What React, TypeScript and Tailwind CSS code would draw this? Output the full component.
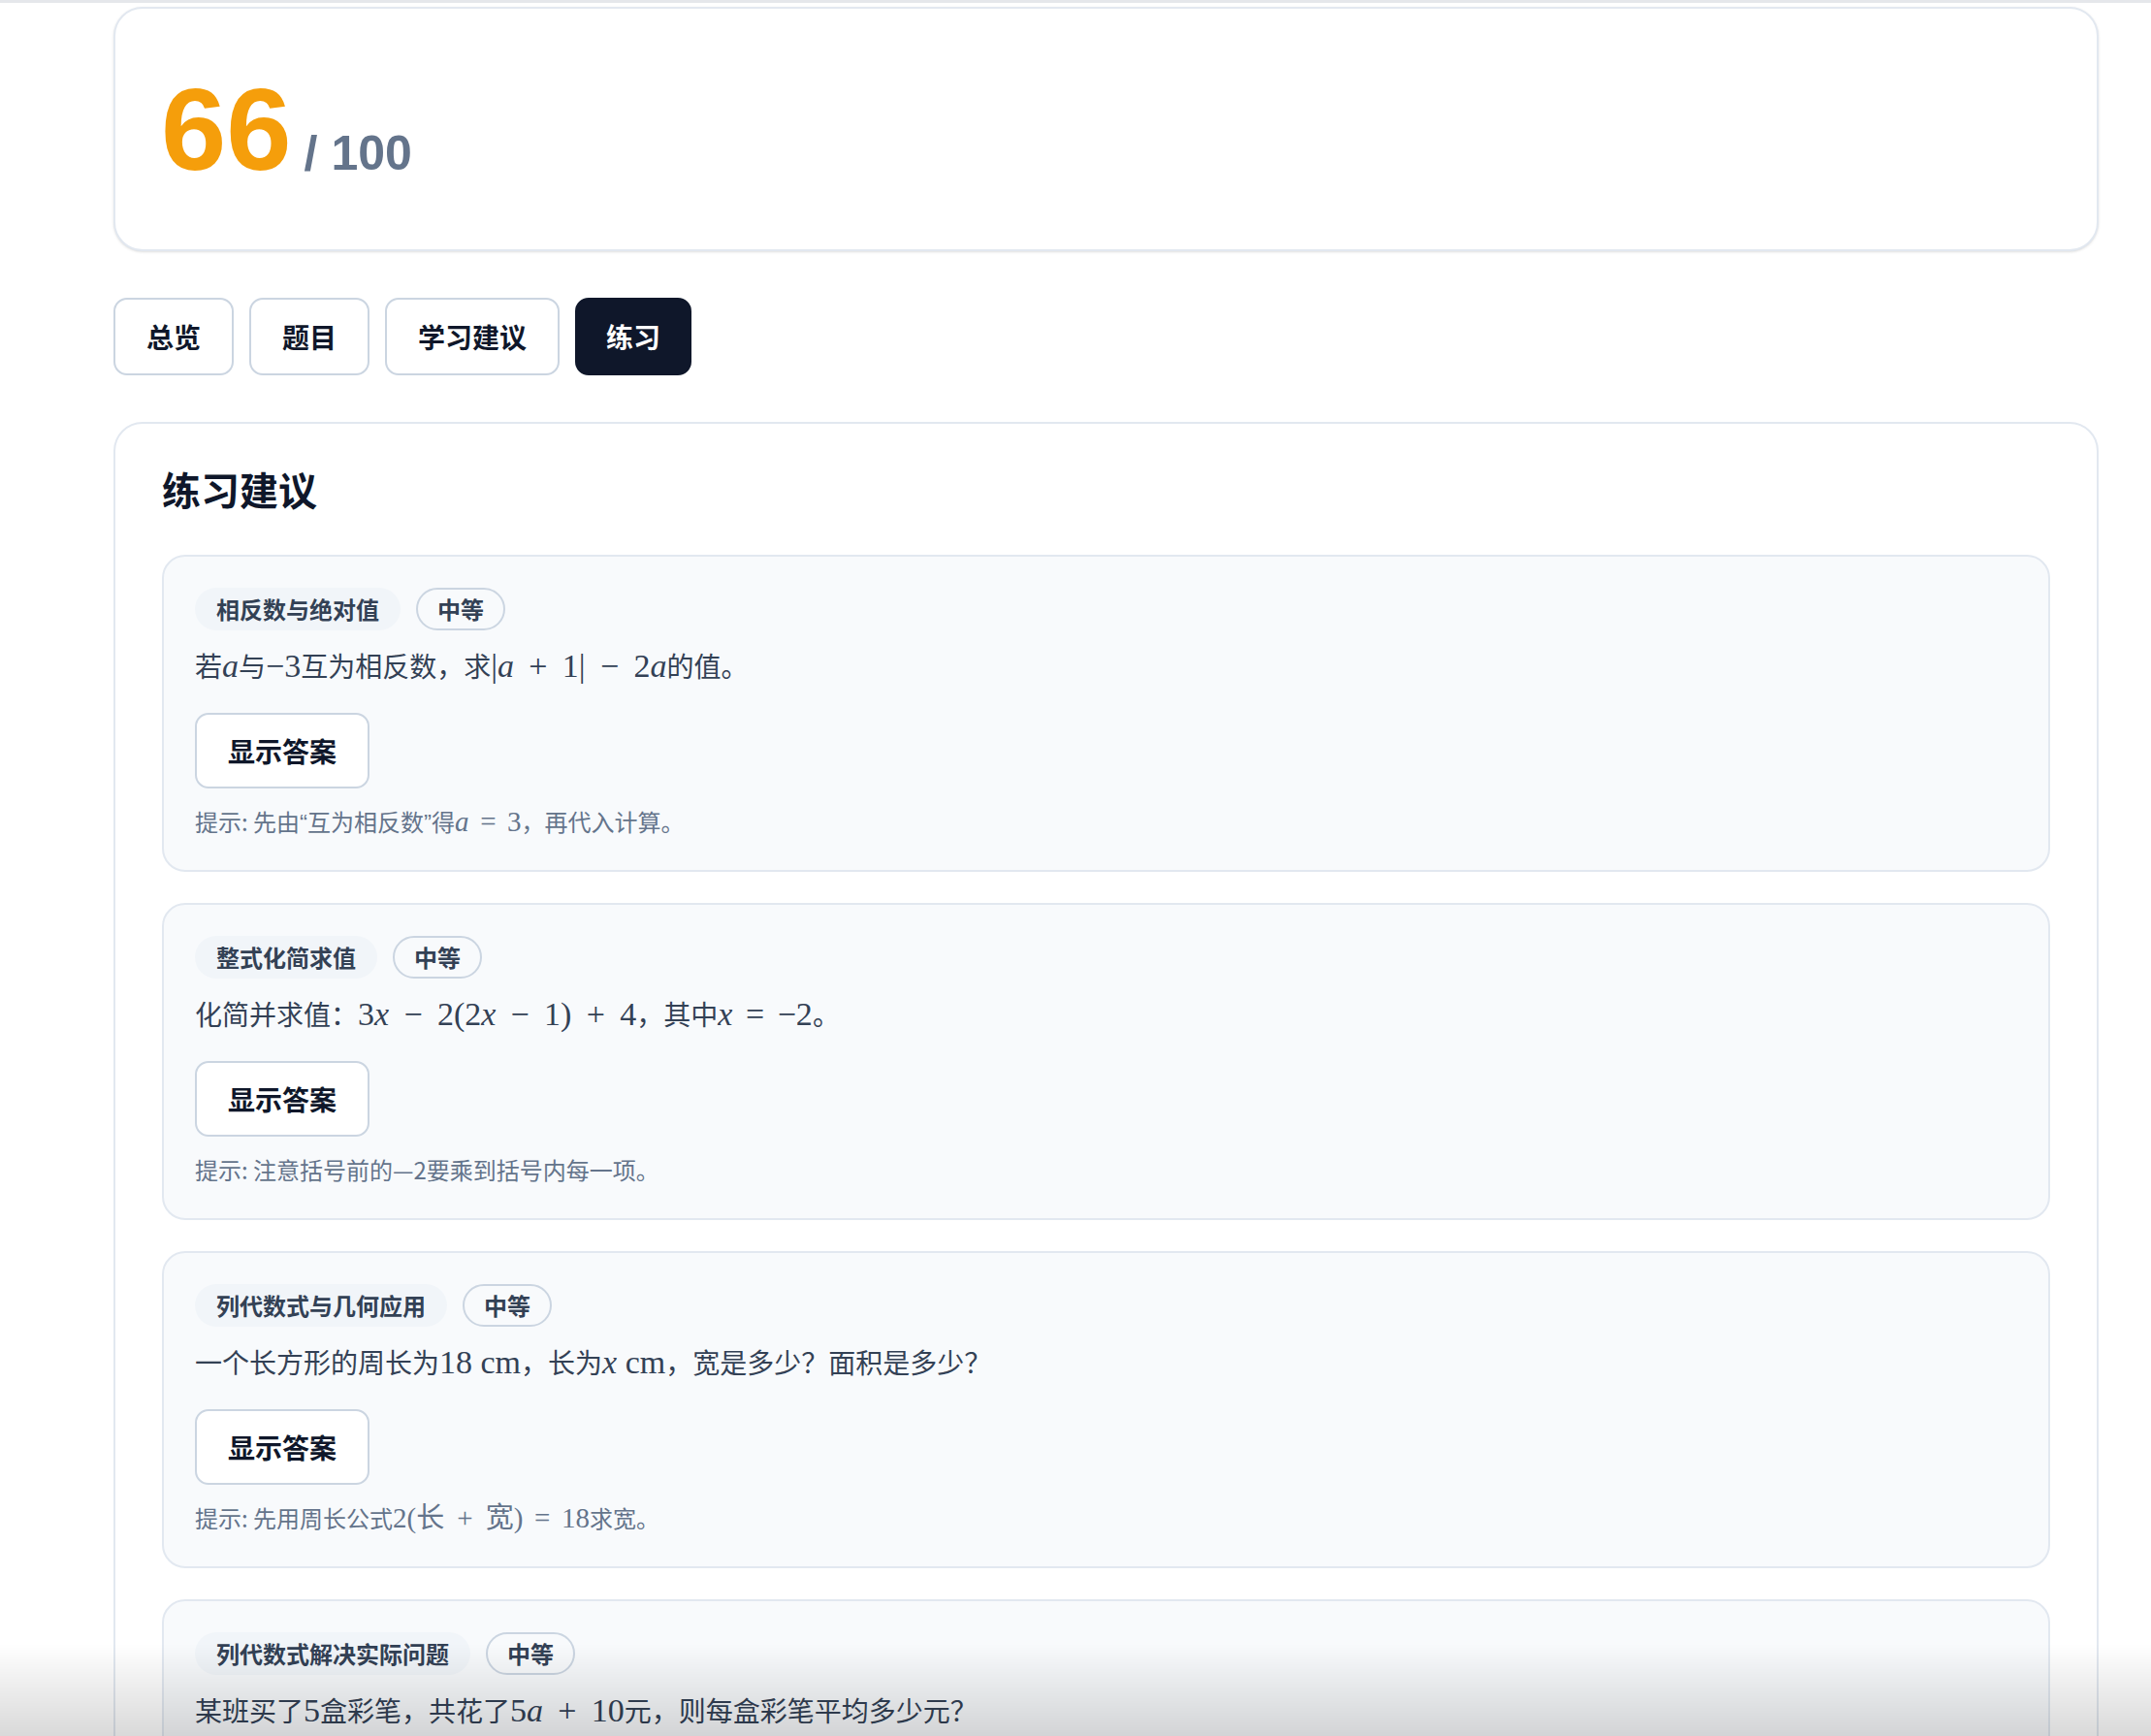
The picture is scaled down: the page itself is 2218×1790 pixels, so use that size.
import React from 'react';

const CJK = "font-['Noto_Sans_CJK_SC',sans-serif]";

// inline math, KaTeX-like; size is 1.21x the surrounding text
function M({ children, small }: { children: React.ReactNode; small?: boolean }) {
  return (
    <span
      className={
        small
          ? "font-['Liberation_Serif','Noto_Sans_CJK_SC',serif] text-[29px] leading-none"
          : "font-['Liberation_Serif','Noto_Sans_CJK_SC',serif] text-[34px] leading-none"
      }
    >
      {children}
    </span>
  );
}
function V({ children }: { children: React.ReactNode }) {
  return <i className="italic">{children}</i>;
}
function Op({ children }: { children: React.ReactNode }) {
  return <span className="mx-[0.45em]">{children}</span>;
}
function Rel({ children }: { children: React.ReactNode }) {
  return <span className="mx-[0.4em]">{children}</span>;
}
function Q({ children }: { children: React.ReactNode }) {
  return <span className="font-['Liberation_Sans',sans-serif]">{children}</span>;
}

type Item = {
  topic: string;
  level: string;
  question: React.ReactNode;
  hint: React.ReactNode;
};

const items: Item[] = [
  {
    topic: '相反数与绝对值',
    level: '中等',
    question: (
      <>
        若<M><V>a</V></M>与<M>−3</M>互为相反数，求<M>|<V>a</V><Op>+</Op>1|<Op>−</Op>2<V>a</V></M>的值。
      </>
    ),
    hint: (
      <>
        提示: 先由<Q>“</Q>互为相反数<Q>”</Q>得<M small><V>a</V><Rel>=</Rel>3</M>，再代入计算。
      </>
    ),
  },
  {
    topic: '整式化简求值',
    level: '中等',
    question: (
      <>
        化简并求值：<M>3<V>x</V><Op>−</Op>2(2<V>x</V><Op>−</Op>1)<Op>+</Op>4</M>，其中<M><V>x</V><Rel>=</Rel>−2</M>。
      </>
    ),
    hint: <>提示: 注意括号前的—2要乘到括号内每一项。</>,
  },
  {
    topic: '列代数式与几何应用',
    level: '中等',
    question: (
      <>
        一个长方形的周长为<M>18 cm</M>，长为<M><V>x</V> cm</M>，宽是多少？面积是多少？
      </>
    ),
    hint: (
      <>
        提示: 先用周长公式<M small>2(<span className={CJK}>长</span><Op>+</Op><span className={CJK}>宽</span>)<Rel>=</Rel>18</M>求宽。
      </>
    ),
  },
  {
    topic: '列代数式解决实际问题',
    level: '中等',
    question: (
      <>
        某班买了<M>5</M>盒彩笔，共花了<M>5<V>a</V><Op>+</Op>10</M>元，则每盒彩笔平均多少元？
      </>
    ),
    hint: <>提示: 用总价除以盒数。</>,
  },
];

const tabs = ['总览', '题目', '学习建议', '练习'];

function PracticeCard({ item }: { item: Item }) {
  return (
    <div className="rounded-[24px] border-2 border-[#e2e8f0] bg-[#f8fafc] p-8">
      <div className="flex items-center gap-4">
        <span className="flex h-[44px] items-center rounded-full bg-[#f1f5f9] px-[22px] text-[24px] font-semibold text-[#334155]">
          {item.topic}
        </span>
        <span className="flex h-[44px] items-center rounded-full border-2 border-[#cbd5e1] px-[20px] text-[24px] font-semibold text-[#334155]">
          {item.level}
        </span>
      </div>
      <p className="mt-3 h-[48px] text-[28px] leading-[48px] text-[#334155]">{item.question}</p>
      <button className="mt-[25px] flex h-[78px] items-center rounded-[14px] border-2 border-[#cbd5e1] bg-white px-8 text-[28px] font-semibold text-[#0f172a]">
        显示答案
      </button>
      <p className="mt-4 h-[36px] text-[24px] leading-[36px] text-[#64748b]">{item.hint}</p>
    </div>
  );
}

export default function App() {
  return (
    <div className={`min-h-screen bg-white ${CJK}`}>
      <div className="h-[3px] bg-[#e5e7eb]" />
      <main className="ml-[117px] mt-[4px] flex w-[2047px] flex-col gap-[48px] pb-16">
        <section className="flex h-[252px] items-center rounded-[30px] border-2 border-[#e2e8f0] bg-white px-[47px] shadow-sm">
          <div className="flex items-baseline font-['Liberation_Sans',Arial,sans-serif] font-bold">
            <span className="text-[121px] leading-none text-[#f59e0b]">66</span>
            <span className="ml-[13px] text-[50px] leading-none text-[#64748b]">/ 100</span>
          </div>
        </section>

        <nav className="flex gap-4">
          {tabs.map((t) => (
            <button
              key={t}
              className={
                t === '练习'
                  ? 'flex h-[80px] items-center rounded-[14px] border-2 border-[#0f172a] bg-[#0f172a] px-[30px] text-[28px] font-semibold text-white'
                  : 'flex h-[80px] items-center rounded-[14px] border-2 border-[#cbd5e1] bg-white px-8 text-[28px] font-semibold text-[#0f172a]'
              }
            >
              {t}
            </button>
          ))}
        </nav>

        <section className="rounded-[30px] border-2 border-[#e2e8f0] bg-white px-[48px] pb-12 pt-[43px]">
          <h2 className="text-[40px] font-bold leading-[48px] text-[#0f172a]">练习建议</h2>
          <div className="mt-[44px] flex flex-col gap-[32px]">
            {items.map((it) => (
              <PracticeCard key={it.topic} item={it} />
            ))}
          </div>
        </section>
      </main>
      <div className="pointer-events-none fixed inset-x-0 bottom-0 h-[95px] bg-linear-to-b from-transparent to-[rgba(0,0,0,0.15)]" />
    </div>
  );
}
